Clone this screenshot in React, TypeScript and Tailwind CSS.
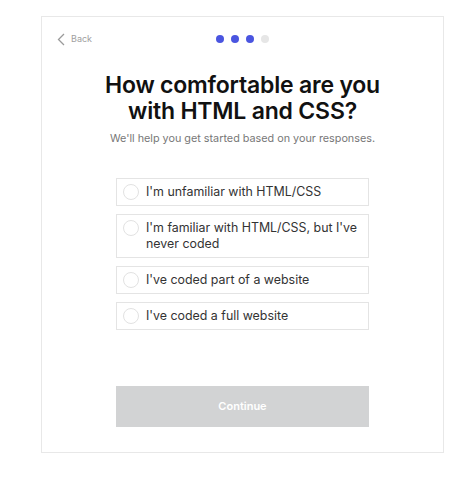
import React, { useState } from "react";

const options = [
  "I'm unfamiliar with HTML/CSS",
  "I'm familiar with HTML/CSS, but I've never coded",
  "I've coded part of a website",
  "I've coded a full website",
];

function ProgressDots({ step, total }: { step: number; total: number }) {
  return (
    <div className="flex items-center justify-center gap-[7px]">
      {Array.from({ length: total }).map((_, i) => (
        <span
          key={i}
          className={
            i < step
              ? "h-[8px] w-[8px] rounded-full bg-[#4a55e0]"
              : "h-[8px] w-[8px] rounded-full bg-[#e6e6e6]"
          }
        />
      ))}
    </div>
  );
}

function OptionRow({
  label,
  selected,
  onClick,
}: {
  label: string;
  selected: boolean;
  onClick: () => void;
}) {
  return (
    <button
      type="button"
      onClick={onClick}
      className="flex w-full items-start gap-[7px] border border-[#e4e4e4] bg-white px-[6px] py-[5px] text-left"
    >
      <span
        className={
          selected
            ? "h-[16px] w-[16px] shrink-0 rounded-full border-[5px] border-[#4a55e0]"
            : "h-[16px] w-[16px] shrink-0 rounded-full border border-[#e2e2e2]"
        }
      />
      <span className="text-[12.4px] leading-[16px] text-[#333]">{label}</span>
    </button>
  );
}

export default function App() {
  const [selected, setSelected] = useState<number | null>(null);

  return (
    <div
      className="min-h-[477px] bg-white pt-[16px] pl-[41px]"
      style={{ fontFamily: "Inter, 'Noto Sans', sans-serif" }}
    >
      <div className="flex h-[437px] w-[403px] flex-col items-center border border-[#e8e8e8] pt-[14px]">
        {/* header */}
        <div className="relative flex h-[16px] w-full items-center justify-center">
          <button
            type="button"
            className="absolute left-[15px] top-0 flex h-[16px] items-center gap-[6px] text-[9px] text-[#a0a0a0]"
          >
            <svg width="8" height="13" viewBox="0 0 8 13" fill="none">
              <path
                d="M7 1L1.5 6.5L7 12"
                stroke="#9a9a9a"
                strokeWidth="1.3"
              />
            </svg>
            Back
          </button>
          <ProgressDots step={3} total={4} />
        </div>

        <h1 className="mt-[25px] text-center text-[23px] font-semibold leading-[26px] tracking-[-0.2px] text-[#111]">
          How comfortable are you
          <br />
          with HTML and CSS?
        </h1>
        <p className="mt-[7px] text-[10.8px] leading-[16px] text-[#777]">
          We'll help you get started based on your responses.
        </p>

        <div className="mt-[31px] flex w-[253px] flex-col gap-[8px]">
          {options.map((opt, i) => (
            <OptionRow
              key={opt}
              label={opt}
              selected={selected === i}
              onClick={() => setSelected(i)}
            />
          ))}
        </div>

        <button
          type="button"
          disabled={selected === null}
          className="mt-[56px] h-[41px] w-[253px] bg-[#d2d3d4] text-[11px] font-semibold text-white"
        >
          Continue
        </button>
      </div>
    </div>
  );
}
